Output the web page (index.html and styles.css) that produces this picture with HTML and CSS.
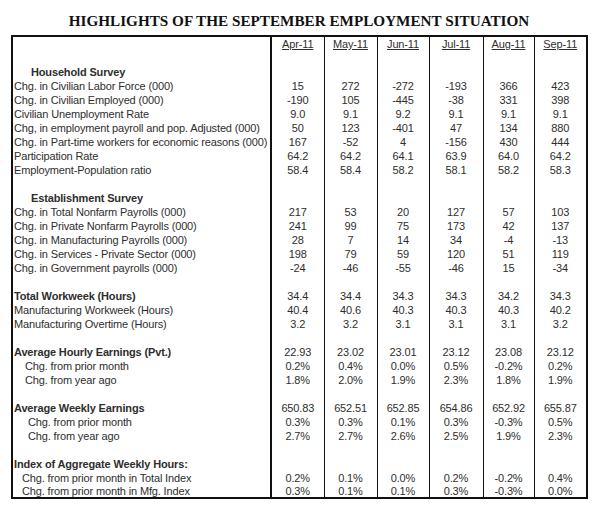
FILE: index.html
```html
<!DOCTYPE html>
<html>
<head>
<meta charset="utf-8">
<link rel="stylesheet" href="styles.css">
</head>
<body>
<div class="page">
  <h1 class="title">HIGHLIGHTS OF THE SEPTEMBER EMPLOYMENT SITUATION</h1>
  <table class="sheet">
    <colgroup>
      <col class="c-label"><col class="c-m53"><col class="c-m53"><col class="c-m52"><col class="c-m54"><col class="c-m51"><col class="c-m53">
    </colgroup>
    <tbody>
      <tr class="head"><td></td><td><u>Apr-11</u></td><td><u>May-11</u></td><td><u>Jun-11</u></td><td><u>Jul-11</u></td><td><u>Aug-11</u></td><td><u>Sep-11</u></td></tr>
      <tr><td></td><td></td><td></td><td></td><td></td><td></td><td></td></tr>
      <tr><td class="sec">Household Survey</td><td></td><td></td><td></td><td></td><td></td><td></td></tr>
      <tr><td>Chg. in Civilian Labor Force (000)</td><td>15</td><td>272</td><td>-272</td><td>-193</td><td>366</td><td>423</td></tr>
      <tr><td>Chg. in Civilian Employed (000)</td><td>-190</td><td>105</td><td>-445</td><td>-38</td><td>331</td><td>398</td></tr>
      <tr><td>Civilian Unemployment Rate</td><td>9.0</td><td>9.1</td><td>9.2</td><td>9.1</td><td>9.1</td><td>9.1</td></tr>
      <tr><td>Chg, in employment payroll and pop. Adjusted (000)</td><td>50</td><td>123</td><td>-401</td><td>47</td><td>134</td><td>880</td></tr>
      <tr><td>Chg. in Part-time workers for economic reasons (000)</td><td>167</td><td>-52</td><td>4</td><td>-156</td><td>430</td><td>444</td></tr>
      <tr><td>Participation Rate</td><td>64.2</td><td>64.2</td><td>64.1</td><td>63.9</td><td>64.0</td><td>64.2</td></tr>
      <tr><td>Employment-Population ratio</td><td>58.4</td><td>58.4</td><td>58.2</td><td>58.1</td><td>58.2</td><td>58.3</td></tr>
      <tr><td></td><td></td><td></td><td></td><td></td><td></td><td></td></tr>
      <tr><td class="sec">Establishment Survey</td><td></td><td></td><td></td><td></td><td></td><td></td></tr>
      <tr><td>Chg. in Total Nonfarm Payrolls (000)</td><td>217</td><td>53</td><td>20</td><td>127</td><td>57</td><td>103</td></tr>
      <tr><td>Chg. in Private Nonfarm Payrolls (000)</td><td>241</td><td>99</td><td>75</td><td>173</td><td>42</td><td>137</td></tr>
      <tr><td>Chg. in Manufacturing Payrolls (000)</td><td>28</td><td>7</td><td>14</td><td>34</td><td>-4</td><td>-13</td></tr>
      <tr><td>Chg. in Services - Private Sector (000)</td><td>198</td><td>79</td><td>59</td><td>120</td><td>51</td><td>119</td></tr>
      <tr><td>Chg. in Government payrolls (000)</td><td>-24</td><td>-46</td><td>-55</td><td>-46</td><td>15</td><td>-34</td></tr>
      <tr><td></td><td></td><td></td><td></td><td></td><td></td><td></td></tr>
      <tr><td class="bold">Total Workweek (Hours)</td><td>34.4</td><td>34.4</td><td>34.3</td><td>34.3</td><td>34.2</td><td>34.3</td></tr>
      <tr><td>Manufacturing Workweek (Hours)</td><td>40.4</td><td>40.6</td><td>40.3</td><td>40.3</td><td>40.3</td><td>40.2</td></tr>
      <tr><td>Manufacturing Overtime (Hours)</td><td>3.2</td><td>3.2</td><td>3.1</td><td>3.1</td><td>3.1</td><td>3.2</td></tr>
      <tr><td></td><td></td><td></td><td></td><td></td><td></td><td></td></tr>
      <tr><td class="bold">Average Hourly Earnings (Pvt.)</td><td>22.93</td><td>23.02</td><td>23.01</td><td>23.12</td><td>23.08</td><td>23.12</td></tr>
      <tr><td class="ind-a">Chg. from prior month</td><td>0.2%</td><td>0.4%</td><td>0.0%</td><td>0.5%</td><td>-0.2%</td><td>0.2%</td></tr>
      <tr><td class="ind-a">Chg. from year ago</td><td>1.8%</td><td>2.0%</td><td>1.9%</td><td>2.3%</td><td>1.8%</td><td>1.9%</td></tr>
      <tr><td></td><td></td><td></td><td></td><td></td><td></td><td></td></tr>
      <tr><td class="bold">Average Weekly Earnings</td><td>650.83</td><td>652.51</td><td>652.85</td><td>654.86</td><td>652.92</td><td>655.87</td></tr>
      <tr><td class="ind-b">Chg. from prior month</td><td>0.3%</td><td>0.3%</td><td>0.1%</td><td>0.3%</td><td>-0.3%</td><td>0.5%</td></tr>
      <tr><td class="ind-b">Chg. from year ago</td><td>2.7%</td><td>2.7%</td><td>2.6%</td><td>2.5%</td><td>1.9%</td><td>2.3%</td></tr>
      <tr><td></td><td></td><td></td><td></td><td></td><td></td><td></td></tr>
      <tr><td class="bold">Index of Aggregate Weekly Hours:</td><td></td><td></td><td></td><td></td><td></td><td></td></tr>
      <tr><td class="ind-c">Chg. from prior month in Total Index</td><td>0.2%</td><td>0.1%</td><td>0.0%</td><td>0.2%</td><td>-0.2%</td><td>0.4%</td></tr>
      <tr class="last"><td class="ind-c">Chg. from prior month in Mfg. Index</td><td>0.3%</td><td>0.1%</td><td>0.1%</td><td>0.3%</td><td>-0.3%</td><td>0.0%</td></tr>
    </tbody>
  </table>
</div>
</body>
</html>
```

FILE: styles.css
```css
html, body {
  margin: 0;
  padding: 0;
  background: #ffffff;
}

.page {
  width: 601px;
  height: 512px;
  padding: 11px 0 0 11px;
  box-sizing: border-box;
}

.title {
  margin: 0;
  width: 576px;
  height: 24px;
  font-family: "Liberation Serif", "Times New Roman", serif;
  font-weight: bold;
  font-size: 15.2px;
  line-height: 20px;
  text-align: center;
  color: #111;
}

.sheet {
  border-collapse: collapse;
  border-spacing: 0;
  table-layout: fixed;
  width: 576px;
  border: 2px solid #111;
  font-family: "Liberation Sans", Arial, sans-serif;
  font-size: 11px;
  letter-spacing: -0.15px;
  color: #2e2e2e;
}

.c-label { width: 259px; }
.c-m53 { width: 53px; }
.c-m52 { width: 52px; }
.c-m54 { width: 54px; }
.c-m51 { width: 51px; }

.sheet td {
  height: 14px;
  padding: 0;
  line-height: 14px;
  text-align: center;
  white-space: nowrap;
  border-left: 1px solid #111;
  overflow: hidden;
}

.sheet td:first-child {
  text-align: left;
  padding-left: 1px;
  border-right: 2px solid #111;
  border-left: none;
}

.sheet td:nth-child(2) {
  border-left: 2px solid #111;
}

.sheet td.sec {
  font-weight: bold;
  padding-left: 18px;
}

.sheet td.bold {
  font-weight: bold;
}

.sheet td.ind-a { padding-left: 12px; }
.sheet td.ind-b { padding-left: 15px; }
.sheet td.ind-c { padding-left: 9px; }

.sheet .last td {
  height: 12px;
  line-height: 12px;
}

.head u {
  text-decoration: underline;
}
```
